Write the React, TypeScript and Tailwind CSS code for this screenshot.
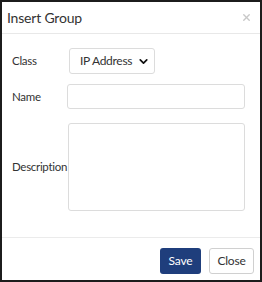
import { ChevronDown, X } from 'lucide-react';

export default function App() {
  return (
    <div
      className="w-[262px] h-[282px] bg-white border-2 border-[#1c1c1c] flex flex-col text-[#333]"
      style={{ fontFamily: 'Lato, "Open Sans", sans-serif' }}
    >
      {/* Header */}
      <div className="h-[32px] flex items-center justify-between pl-[5px] pr-[8px] border-b border-[#e8e8e8] shrink-0">
        <span className="text-[14px] leading-none tracking-[-0.2px] text-[#333]">Insert Group</span>
        <X size={11} strokeWidth={3} className="text-[#c8c8c8]" />
      </div>

      {/* Body */}
      <div className="flex-1 pl-[10px] pr-[15px] pt-[14px] text-[11.5px] tracking-[-0.3px]">
        <div className="flex items-center h-[26px]">
          <span className="w-[57px] shrink-0">Class</span>
          <button className="h-[26px] w-[86px] border border-[#dcdcdc] rounded-[3px] flex items-center pl-[10px] gap-[5px] text-[12px] text-[#333] tracking-[-0.3px]">
            IP Address
            <ChevronDown size={13} strokeWidth={3.2} className="text-[#111]" />
          </button>
        </div>
        <div className="flex items-center h-[25px] mt-[10px]">
          <span className="w-[55px] shrink-0">Name</span>
          <div className="h-[25px] flex-1 border border-[#dcdcdc] rounded-[3px]" />
        </div>
        <div className="flex items-center h-[88px] mt-[14px]">
          <span className="w-[56px] shrink-0 whitespace-nowrap">Description</span>
          <div className="h-[88px] flex-1 border border-[#dcdcdc] rounded-[3px]" />
        </div>
      </div>

      {/* Footer */}
      <div className="h-[43px] border-t border-[#ebebeb] flex items-start justify-end gap-[8px] pt-[10px] pr-[6px] shrink-0 text-[12px] tracking-[-0.2px]">
        <button className="h-[26px] w-[41px] bg-[#1f3e7c] text-white rounded-[3px]">Save</button>
        <button className="h-[26px] w-[45px] bg-white border border-[#d0d0d0] rounded-[3px] text-[#333]">Close</button>
      </div>
    </div>
  );
}
